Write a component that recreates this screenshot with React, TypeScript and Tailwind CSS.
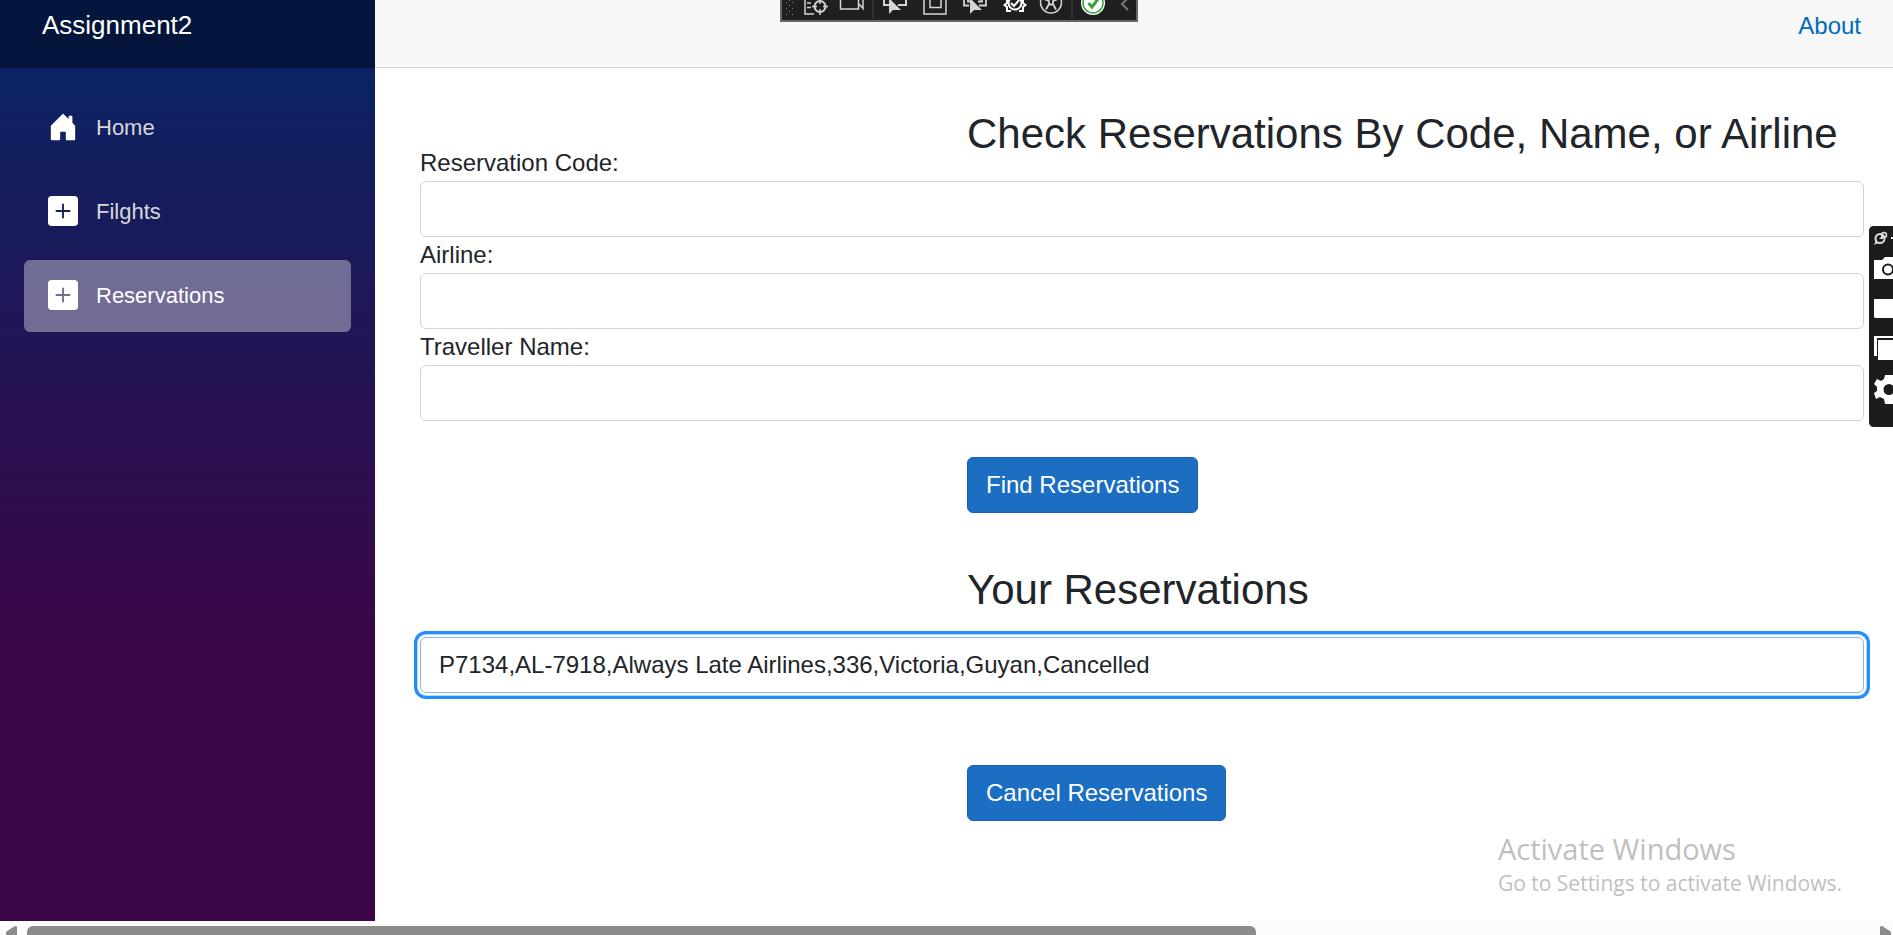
import { useState } from "react";
import type { ReactNode } from "react";
import { BsHouseDoorFill, BsPlusSquareFill } from "react-icons/bs";

function NavItem({ icon, label, active = false }: { icon: ReactNode; label: string; active?: boolean }) {
  return (
    <li>
      <a
        href="#"
        aria-current={active ? "page" : undefined}
        className={
          active
            ? "flex h-[72px] items-center gap-[18px] rounded-md bg-white/[0.37] px-6 text-[22px] text-white"
            : "flex h-[72px] items-center gap-[18px] rounded-md px-6 text-[22px] text-[#d7d7d7]"
        }
      >
        <span className="pb-0.5 text-[30px] text-white">{icon}</span>
        {label}
      </a>
    </li>
  );
}

const inputClass =
  "block h-14 w-full rounded-md border border-[#ced4da] bg-white px-[18px] text-2xl text-[#212529] outline-none";
const buttonClass =
  "h-14 rounded-md border border-[#1861ac] bg-[#1b6ec2] px-[18px] text-2xl text-white";

function DebugToolbar() {
  return (
    <svg
      aria-hidden="true"
      className="absolute top-0 left-[780px] h-[22px] w-[358px]"
      viewBox="0 0 358 22"
      fill="none"
      stroke="#d4d4d4"
      strokeWidth="1.5"
    >
      <path d="M0 0H358V22H0Z" fill="#666" stroke="none" />
      <path d="M2 0H356V20H2Z" fill="#1f1f1f" stroke="none" />
      <path
        d="M6 2h1v1h-1zM9 0h1v1h-1zM12 2h1v1h-1zM6 8h1v1h-1zM12 8h1v1h-1zM9 5h1v1h-1zM9 11h1v1h-1zM6 14h1v1h-1zM12 14h1v1h-1z"
        fill="#808080"
        stroke="none"
      />
      <path d="M25 0V14H34M27 3H31M27 7.500H31" />
      <circle cx="40" cy="6.500" r="5.500" strokeWidth="2" />
      <path d="M40 0V4M40 9V15M32 6.500H37M43 6.500H48" />
      <path d="M60.500 0V9H78.500V0M79 4L83 8.500V0" />
      <path d="M93 0V19M292 0V19" stroke="#3a3a3a" />
      <path d="M104 0V5H109M126 0V5H118" strokeWidth="2" />
      <path d="M109 -2V14L113 10L121 10Z" fill="#d4d4d4" stroke="none" />
      <path d="M144 0V14H166V0M150 0V7.500H161V0" />
      <path d="M184 0V5.500H189M206 0V5.500H199M188 0V1.500H190M202 0V1.500H198" strokeWidth="1.800" />
      <path d="M190 -2V14L194 10L202 10Z" fill="#d4d4d4" stroke="none" />
      <path d="M227 0V3L224.500 5L227 7V11H231M243 0V3L245.500 5L243 7V11H239" stroke="#fff" strokeWidth="2" />
      <circle cx="235" cy="3" r="6.500" stroke="#fff" strokeWidth="2" />
      <path d="M231 3L234 6L240 -1" stroke="#fff" strokeWidth="2" />
      <circle cx="271" cy="2.500" r="10.500" />
      <path d="M264 -1L269 1V4L266 9.500M278 -1L273 1V4L276 9.500M269 4.500H273" strokeWidth="1.800" />
      <circle cx="313" cy="3" r="12" fill="#fff" stroke="none" />
      <circle cx="313" cy="3" r="10" stroke="#36a03c" />
      <path d="M308.500 3L312 7L318 -1" stroke="#36a03c" strokeWidth="3" />
      <path d="M348 -2L342 4L348 10" stroke="#777" strokeWidth="2" />
    </svg>
  );
}

function CaptureToolbar() {
  return (
    <svg
      aria-hidden="true"
      className="absolute top-[226px] right-0 h-[201px] w-6"
      viewBox="0 0 24 201"
      fill="#fff"
    >
      <path d="M5 0H24V201H5Q0 201 0 196V5Q0 0 5 0Z" fill="#1c1c1c" />
      <circle cx="11" cy="12.500" r="4.500" fill="none" stroke="#ddd" strokeWidth="2" />
      <circle cx="15" cy="9" r="2.500" fill="none" stroke="#ddd" strokeWidth="1.500" />
      <path d="M5 19L7 14L9 17ZM10 13L14 9V13Z" fill="#ddd" />
      <path d="M22 11H24V13H22Z" />
      <path d="M5 34H13L16 31H24V53H5Z" />
      <circle cx="19" cy="43.500" r="5" fill="#fff" stroke="#1c1c1c" strokeWidth="2" />
      <path d="M5 73H24V92H6L5 91Z" />
      <path d="M5 110H24V112H8V130H5Z" />
      <path d="M9 114H24V134H9Z" />
      <path
        fillRule="evenodd"
        d="M16 149H24V178H16L15 173L11 171L7 173L5 167L8 165V161L5 158L8 153L12 155L15 153ZM20 158A5.500 5.500 0 1 0 20 169A5.500 5.500 0 1 0 20 158Z"
      />
    </svg>
  );
}

export default function App() {
  const [code, setCode] = useState("");
  const [airline, setAirline] = useState("");
  const [name, setName] = useState("");
  const [selected, setSelected] = useState("P7134,AL-7918,Always Late Airlines,336,Victoria,Guyan,Cancelled");

  return (
    <div className="relative flex h-screen flex-col overflow-hidden bg-white font-['Liberation_Sans',Arial,sans-serif] text-2xl leading-9 text-[#212529]">
      <div className="flex min-h-0 flex-1">
        <aside className="w-[375px] shrink-0 bg-linear-to-b/srgb from-[#062666] to-[#3a0647] to-70%">
          <div className="h-[68px] bg-black/40 px-[42px] pt-[7px]">
            <a href="#" className="text-[26px] text-white">
              Assignment2
            </a>
          </div>
          <nav className="px-6 pt-6">
            <ul className="flex flex-col gap-3">
              <NavItem icon={<BsHouseDoorFill />} label="Home" />
              <NavItem icon={<BsPlusSquareFill />} label="Filghts" />
              <NavItem icon={<BsPlusSquareFill />} label="Reservations" active />
            </ul>
          </nav>
        </aside>

        <div className="flex min-w-0 flex-1 flex-col">
          <header className="flex h-[68px] justify-end border-b border-[#d6d5d5] bg-[#f7f7f7] px-8 pt-2">
            <a href="#" className="text-[#006bb7]">
              About
            </a>
          </header>

          <main className="pt-10 pr-[29px] pl-[45px]">
            <div className="flex items-end justify-between">
              <label htmlFor="code" className="w-[547px] shrink-0">
                Reservation Code:
              </label>
              <h3 className="mt-px mb-[22px] flex-1 text-[42px] leading-[50px] whitespace-nowrap">
                Check Reservations By Code, Name, or Airline
              </h3>
            </div>
            <input id="code" className={inputClass} value={code} onChange={(e) => setCode(e.target.value)} />
            <label htmlFor="airline" className="block">
              Airline:
            </label>
            <input id="airline" className={inputClass} value={airline} onChange={(e) => setAirline(e.target.value)} />
            <label htmlFor="name" className="block">
              Traveller Name:
            </label>
            <input id="name" className={inputClass} value={name} onChange={(e) => setName(e.target.value)} />

            <div className="pt-9 pl-[547px]">
              <button type="button" className={buttonClass}>
                Find Reservations
              </button>
              <h3 id="results" className="mt-[52px] mb-[22px] text-[42px] leading-[50px]">
                Your Reservations
              </h3>
            </div>
            <input
              aria-labelledby="results"
              className="block h-14 w-full rounded-md border border-[#86b7fe] bg-white px-[18px] text-2xl text-[#212529] shadow-[0_0_0_2px_white,0_0_0_3px_#b5d6fd,0_0_0_6px_#258cfb] outline-none"
              value={selected}
              onChange={(e) => setSelected(e.target.value)}
            />
            <div className="pt-[72px] pl-[547px]">
              <button type="button" className={buttonClass}>
                Cancel Reservations
              </button>
            </div>
          </main>
        </div>
      </div>

      <div aria-hidden="true" className="flex h-3.5 shrink-0 items-end bg-[#fcfcfc]">
        <svg className="ml-1.5 h-[9px] w-[11px]" viewBox="0 0 11 9" fill="#8b8b8b">
          <path d="M11 9V1Q11 0 9 0L1 5Q0 6 0 7V9Z" />
        </svg>
        <div className="ml-2.5 h-[9px] w-[64.9%] rounded-t-md bg-[#8b8b8b]" />
        <svg className="mr-0.5 ml-auto h-[9px] w-[11px]" viewBox="0 0 11 9" fill="#8b8b8b">
          <path d="M0 9V1Q0 0 2 0L10 5Q11 6 11 7V9Z" />
        </svg>
      </div>

      <DebugToolbar />
      <CaptureToolbar />

      <div className="pointer-events-none absolute right-[51px] bottom-[36px] font-['Open_Sans','Noto_Sans',sans-serif] whitespace-nowrap text-[#bfbfbf]">
        <p className="text-[29px] leading-9">Activate Windows</p>
        <p className="text-[21px] leading-8">Go to Settings to activate Windows.</p>
      </div>
    </div>
  );
}
